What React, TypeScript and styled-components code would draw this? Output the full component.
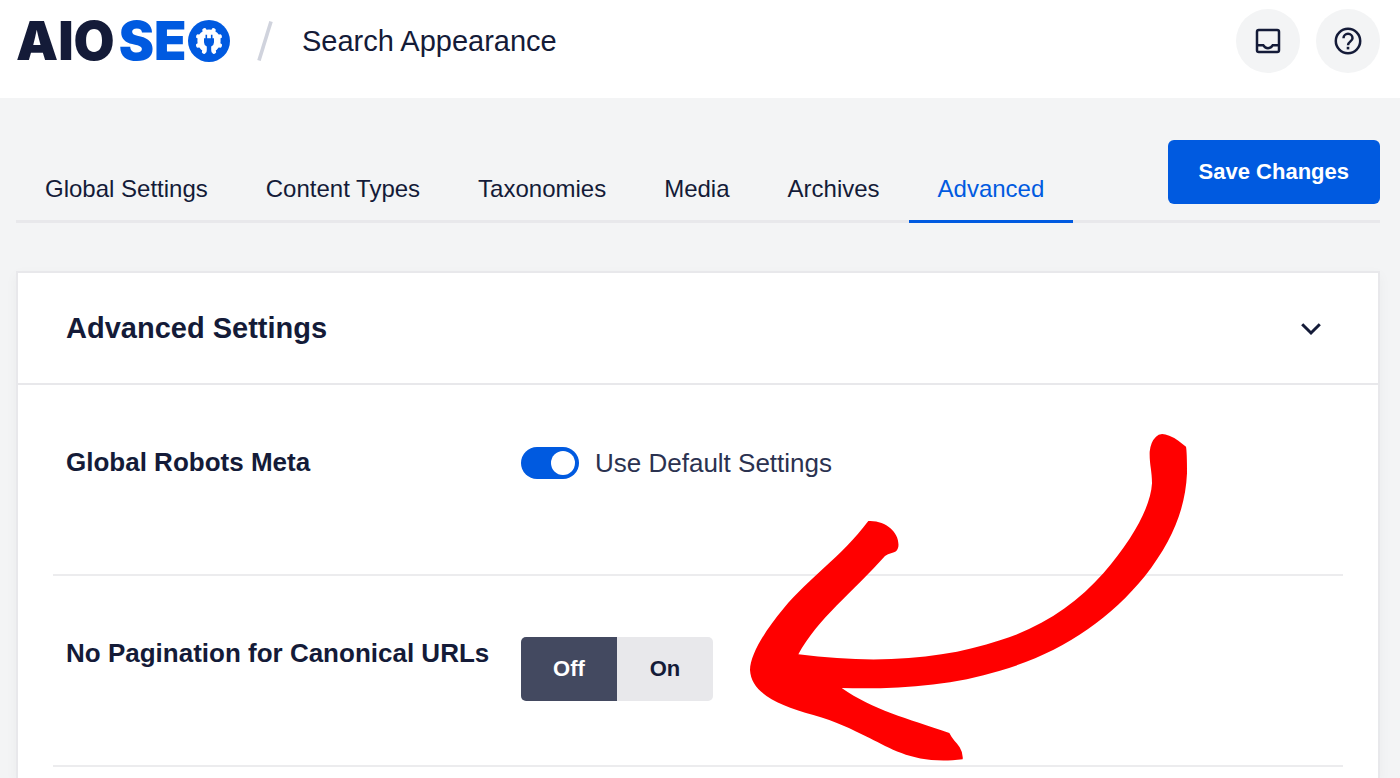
import React, { useState } from 'react';
import styled, { createGlobalStyle } from 'styled-components';

const navy = '#141b38';
const blue = '#005ae0';
const line = '#e8e8eb';

const GlobalStyle = createGlobalStyle`
  *, *::before, *::after { box-sizing: border-box; }
  body {
    margin: 0;
    background: #f3f4f5;
    color: ${navy};
    font-family: "Liberation Sans", Arial, Helvetica, sans-serif;
  }
  button, input { font-family: inherit; }
`;

const Page = styled.div`
  display: flex;
  flex-direction: column;
  min-height: 100vh;
`;

const Header = styled.header`
  display: flex;
  align-items: center;
  padding: 9px 20px 25px 16px;
  background: #fff;
`;

const Logo = styled.a`
  display: flex;
  align-items: center;
  width: 214px;
  color: ${navy};
  font: 900 53px/64px Inter, "Open Sans", sans-serif;
  text-decoration: none;
`;

const LogoAccent = styled.span`
  margin-left: 4px;
  color: ${blue};
`;

const LogoBadge = styled.svg`
  flex: none;
  width: 46px;
  height: 46px;
  margin-left: auto;
`;

const Slash = styled.svg`
  width: 18px;
  height: 42px;
  margin: 0 28px 0 26px;
`;

const PageTitle = styled.h1`
  margin: 0;
  font-size: 29px;
  font-weight: 400;
  line-height: 36px;
`;

const HeaderActions = styled.div`
  display: flex;
  gap: 16px;
  margin-left: auto;
`;

const RoundButton = styled.button`
  display: grid;
  place-items: center;
  width: 64px;
  height: 64px;
  padding: 0;
  border: 0;
  border-radius: 50%;
  background: #f3f4f5;
  color: ${navy};
`;

const Content = styled.main`
  display: flex;
  flex: 1;
  flex-direction: column;
  padding: 42px 20px 0 16px;
`;

const TabBar = styled.div`
  display: flex;
  align-items: flex-start;
  justify-content: space-between;
  border-bottom: 3px solid ${line};
`;

const Tabs = styled.nav`
  display: flex;
  padding-top: 16px;
  margin-bottom: -3px;
`;

const Tab = styled.a<{ $active?: boolean }>`
  padding: 18px 29px 16px;
  border-bottom: 3px solid ${(p) => (p.$active ? blue : 'transparent')};
  color: ${(p) => (p.$active ? blue : navy)};
  font-size: 24px;
  line-height: 30px;
  text-decoration: none;
  white-space: nowrap;
`;

const SaveButton = styled.button`
  padding: 0 31px;
  border: 0;
  border-radius: 6px;
  background: ${blue};
  color: #fff;
  font-size: 22px;
  font-weight: 700;
  line-height: 64px;
  white-space: nowrap;
`;

const Card = styled.section`
  flex: 1;
  margin-top: 48px;
  border: 2px solid ${line};
  border-bottom: 0;
  background: #fff;
  box-shadow: 0 4px 12px rgba(0, 0, 0, 0.04);
`;

const CardHeader = styled.div`
  display: flex;
  align-items: center;
  justify-content: space-between;
  padding: 37px 56px 37px 48px;
  border-bottom: 2px solid ${line};
`;

const CardTitle = styled.h2`
  margin: 0;
  font-size: 29px;
  line-height: 36px;
`;

const CollapseButton = styled.button`
  display: flex;
  padding: 2px 0 0;
  border: 0;
  background: none;
  color: ${navy};
`;

const Rows = styled.div`
  padding: 0 35px;
`;

const Row = styled.div`
  display: grid;
  grid-template-columns: 455px 1fr;
  align-items: start;
  min-height: 191px;
  padding: 61px 13px 64px;
  border-bottom: 2px solid #ececee;
`;

const RowLabel = styled.h3`
  margin: 0;
  font-size: 26px;
  line-height: 32px;
`;

const ToggleLabel = styled.label`
  display: flex;
  align-items: center;
  gap: 16px;
  color: #2b3250;
  font-size: 26px;
  line-height: 34px;
`;

const Toggle = styled.input`
  display: flex;
  appearance: none;
  width: 58px;
  height: 32px;
  margin: 0;
  padding: 4px;
  border-radius: 16px;
  background: #8c8f9a;

  &::before {
    content: '';
    width: 24px;
    height: 24px;
    border-radius: 50%;
    background: #fff;
  }

  &:checked {
    justify-content: flex-end;
    background: ${blue};
  }
`;

const SegmentArea = styled.div`
  position: relative;
  width: max-content;
`;

const Segments = styled.div`
  display: flex;
  overflow: hidden;
  border-radius: 5px;
`;

const Segment = styled.label<{ $selected: boolean }>`
  display: flex;
  justify-content: center;
  width: 96px;
  background: ${(p) => (p.$selected ? '#434960' : line)};
  color: ${(p) => (p.$selected ? '#fff' : navy)};
  font-size: 22px;
  font-weight: 700;
  line-height: 64px;
`;

const SegmentInput = styled.input`
  appearance: none;
  width: 0;
  height: 0;
  margin: 0;
`;

const Arrow = styled.svg`
  position: absolute;
  top: -203px;
  left: 229px;
  width: 438px;
  height: 328px;
  pointer-events: none;
`;

const tabs = ['Global Settings', 'Content Types', 'Taxonomies', 'Media', 'Archives', 'Advanced'];

function GearPlug() {
  return (
    <LogoBadge viewBox="0 0 46 46" aria-hidden="true">
      <circle cx="23" cy="23" r="23" fill="#fff" />
      <circle cx="23" cy="23" r="21" fill={blue} />
      <g fill="#fff">
        {[-155, -112, -67, -23, 23, 67, 112, 155].map((angle) => (
          <rect key={angle} x="20.900" y="9.200" width="4.200" height="6" rx="1.800" transform={`rotate(${angle} 23 23)`} />
        ))}
        <circle cx="23" cy="23" r="11.600" />
      </g>
      <path
        fill={blue}
        d="M19.500 16.800h1.600v3.500h3.800v-3.500h1.600v3.500h1.500v4q0 3-2.800 4.300v3.400l.8 5h-6l.8-5v-3.400q-2.800-1.300-2.800-4.300v-4h1.500z"
      />
    </LogoBadge>
  );
}

function InboxIcon() {
  return (
    <svg width="26" height="26" viewBox="0 0 26 26" fill="none" stroke="currentColor" strokeWidth="2.5" aria-hidden="true">
      <rect x="2" y="2" width="22" height="22" rx="1.8" />
      <path d="M2 17.200h6.200c1 1.800 2.700 3 4.800 3s3.800-1.200 4.800-3H24" />
    </svg>
  );
}

function HelpIcon() {
  return (
    <svg width="28" height="28" viewBox="0 0 28 28" fill="none" stroke="currentColor" strokeWidth="2.500" aria-hidden="true">
      <circle cx="14" cy="14" r="12.200" />
      <path d="M9.500 11.300a4.500 4.500 0 0 1 9 0c0 3-4.500 3.300-4.500 7" />
      <path d="M14 19.800v2.600" strokeWidth="2.600" />
    </svg>
  );
}

export default function App() {
  const [canonical, setCanonical] = useState('Off');

  return (
    <Page>
      <GlobalStyle />
      <Header>
        <Logo href="#">
          <span>AIO</span>
          <LogoAccent>SE</LogoAccent>
          <GearPlug />
        </Logo>
        <Slash viewBox="0 0 18 42" aria-hidden="true">
          <path d="M3 40.500 15 1.500" stroke="#d0d3dd" strokeWidth="3.600" />
        </Slash>
        <PageTitle>Search Appearance</PageTitle>
        <HeaderActions>
          <RoundButton aria-label="Notifications">
            <InboxIcon />
          </RoundButton>
          <RoundButton aria-label="Help">
            <HelpIcon />
          </RoundButton>
        </HeaderActions>
      </Header>

      <Content>
        <TabBar>
          <Tabs>
            {tabs.map((tab) => (
              <Tab key={tab} href="#" $active={tab === 'Advanced'}>
                {tab}
              </Tab>
            ))}
          </Tabs>
          <SaveButton>Save Changes</SaveButton>
        </TabBar>

        <Card>
          <CardHeader>
            <CardTitle>Advanced Settings</CardTitle>
            <CollapseButton aria-label="Collapse Advanced Settings">
              <svg width="22" height="14" viewBox="0 0 22 14" fill="none" stroke="currentColor" strokeWidth="3">
                <path d="M2.200 2.200 11 11l8.800-8.800" />
              </svg>
            </CollapseButton>
          </CardHeader>
          <Rows>
            <Row>
              <RowLabel>Global Robots Meta</RowLabel>
              <ToggleLabel>
                <Toggle type="checkbox" defaultChecked />
                Use Default Settings
              </ToggleLabel>
            </Row>
            <Row>
              <RowLabel>No Pagination for Canonical URLs</RowLabel>
              <SegmentArea>
                <Segments role="radiogroup" aria-label="No Pagination for Canonical URLs">
                  {['Off', 'On'].map((option) => (
                    <Segment key={option} $selected={canonical === option}>
                      <SegmentInput
                        type="radio"
                        name="canonical"
                        checked={canonical === option}
                        onChange={() => setCanonical(option)}
                      />
                      {option}
                    </Segment>
                  ))}
                </Segments>
                <Arrow viewBox="60 72 1314 984" aria-hidden="true">
                  <path
                    fill="#f00"
                    d="M1278 80Q1296 60 1345 92L1368 110Q1371 125 1371 190C1366 300 1325 395 1245 498C1135 633 990 730 810 782C660 828 500 838 335 834C430 900 530 925 658 969C665 985 680 998 689 1012Q700 1030 698 1048C560 1065 490 1020 420 985C360 955 320 935 250 915C140 885 64 848 60 780C60 735 106 660 160 596C240 500 330 445 415 333C470 330 510 370 505 410Q503 422 492 427L474 433L465 438C370 545 262 627 205 733C450 765 650 745 810 691C940 650 1040 580 1120 490C1210 385 1262 290 1266 220C1266 180 1258 165 1259 125Q1262 95 1278 80Z"
                  />
                </Arrow>
              </SegmentArea>
            </Row>
          </Rows>
        </Card>
      </Content>
    </Page>
  );
}
